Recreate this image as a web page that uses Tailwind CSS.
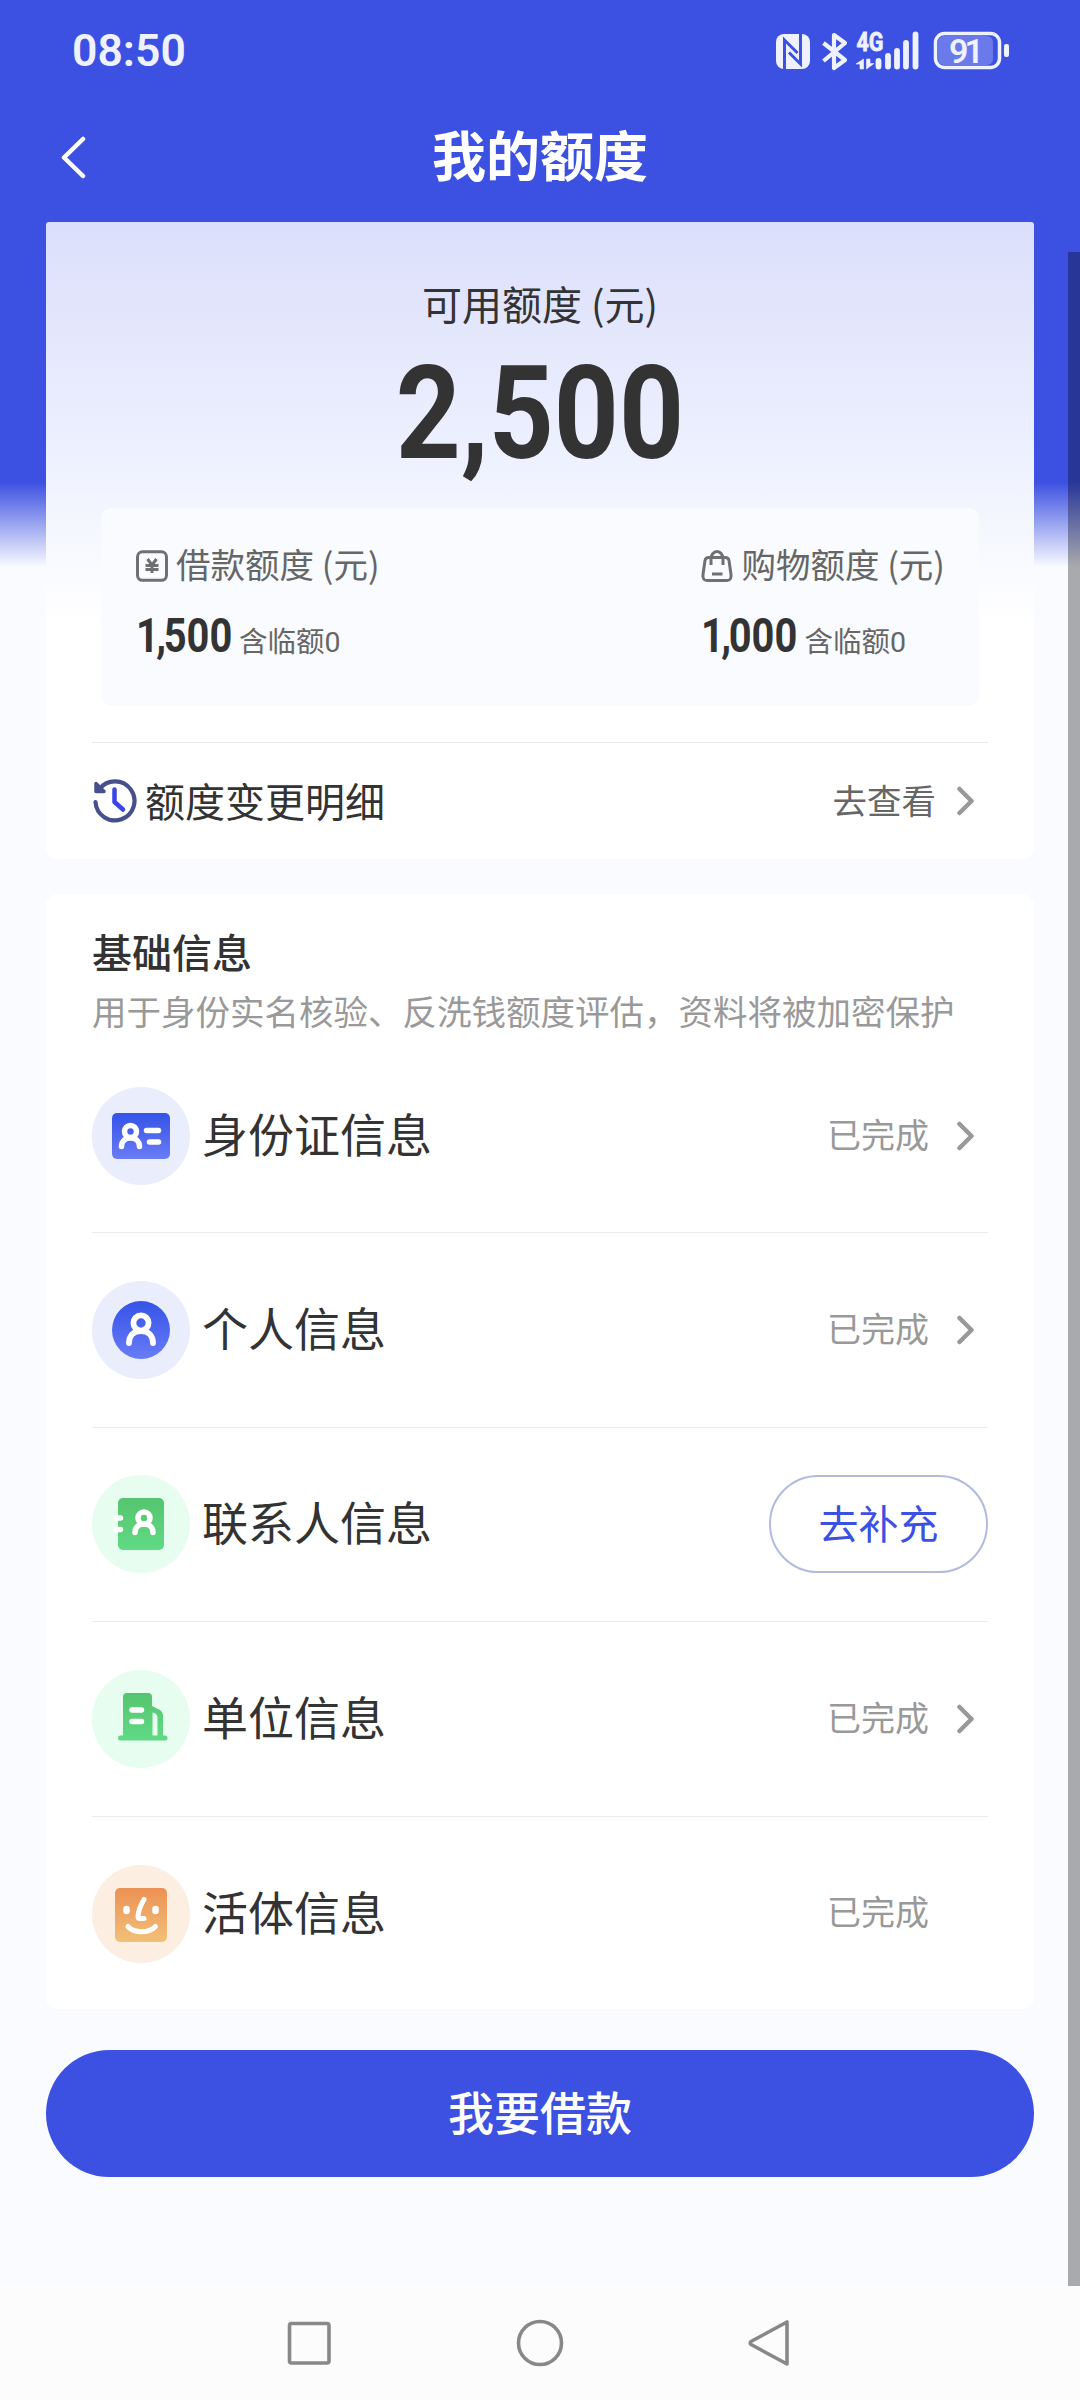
<!DOCTYPE html>
<html lang="zh-CN">
<head>
<meta charset="utf-8">
<title>我的额度</title>
<script src="https://cdn.jsdelivr.net/npm/@tailwindcss/browser@4"></script>
</head>
<body class="bg-[#f9fbff]">
<svg class="absolute h-0 w-0">
  <defs>
    <linearGradient id="blue" x1="0" y1="0" x2="0" y2="1"><stop offset="0" stop-color="#3453e8"/><stop offset="1" stop-color="#6a7cf6"/></linearGradient>
    <linearGradient id="green" x1="0" y1="0" x2="0" y2="1"><stop offset="0" stop-color="#56c46e"/><stop offset="1" stop-color="#60da85"/></linearGradient>
    <linearGradient id="orange" x1="0" y1="0" x2="0" y2="1"><stop offset="0" stop-color="#ec9154"/><stop offset="1" stop-color="#f2c077"/></linearGradient>
    <symbol id="chev" viewBox="0 0 18 30"><path d="M2.500 3 14.500 15 2.500 27" fill="none" stroke="#999" stroke-width="4.500" stroke-linecap="round" stroke-linejoin="round"/></symbol>
  </defs>
</svg>
<div class="relative flex h-[2400px] w-[1080px] flex-col overflow-hidden bg-[linear-gradient(180deg,#3c50e1_0,#3c50e1_482px,#f9fbff_567px)] font-['Noto_Sans_CJK_SC',sans-serif] text-[#333]">

  <!-- status bar -->
  <div class="flex h-[102px] items-center justify-between pr-[70px] pl-[72px]">
    <span class="font-['Roboto',sans-serif] text-[44.500px] leading-none font-semibold text-[#eef1ff]">08:50</span>
    <svg class="h-10 w-[236px] overflow-visible" viewBox="774 31 236 40" fill="none" stroke="#eef1ff">
      <rect x="776" y="34" width="34" height="35" rx="8" fill="#eef1ff" stroke="none"/>
      <path d="M784.500 69.500V40L797.500 53M800.500 33.500V64L789 52.500" stroke="#3c50e1" stroke-width="3"/>
      <path d="M823.500 43 845 60 834 68V35L845 43 823.500 61" stroke-width="4.200" stroke-linejoin="round"/>
      <text x="856.500" y="51" font-family="Roboto" font-weight="700" font-size="25" textLength="27" lengthAdjust="spacingAndGlyphs" fill="#eef1ff" stroke="#eef1ff" stroke-width=".8">4G</text>
      <path d="M863.500 59v10h-3.500v-5h-4zM866.500 69V59h3.500v4.500h4z" fill="#eef1ff" stroke="#eef1ff" stroke-width=".6"/>
      <path d="M878.500 61v5.500M888 56v10.500M897 51v15.500M906 43v23.500M915.500 34.500v32" stroke-width="5.800" stroke-linecap="round"/>
      <rect x="938" y="36" width="55" height="29" rx="6" fill="#6a7aea" stroke="none"/>
      <rect x="935.500" y="33.500" width="64" height="34" rx="9" stroke-width="3.500"/>
      <rect x="1004" y="44" width="5" height="13" rx="2" fill="#eef1ff" stroke="none"/>
      <text x="949" y="62.500" font-family="Roboto" font-weight="600" font-size="34" textLength="35" fill="#eef1ff" stroke="none">91</text>
    </svg>
  </div>

  <!-- title bar -->
  <div class="flex h-[120px] shrink-0 items-start pt-[34px] pl-[60px]">
    <svg class="h-[44px] w-7" viewBox="0 0 28 44"><path d="M23 3 4 21.500 23 40" fill="none" stroke="#fff" stroke-width="4.500" stroke-linecap="round" stroke-linejoin="round"/></svg>
    <h1 class="-mt-[9px] mr-[88px] flex-1 text-center text-[54px] leading-[54px] font-bold text-white">我的额度</h1>
  </div>

  <!-- quota card -->
  <section class="mx-[46px] flex h-[637px] shrink-0 flex-col rounded-t-[3px] rounded-b-xl bg-white bg-[linear-gradient(180deg,#dbdffb_0,#eef1fe_240px,#fff_400px)] px-[46px]">
    <p class="mt-[61px] text-center text-[40px] leading-[40px]">可用额度 (元)</p>
    <div class="mt-[26px] flex h-[130px] justify-center">
      <span class="block scale-x-[.88] font-['Roboto',sans-serif] text-[129px] leading-[130px] font-bold">2,500</span>
    </div>
    <div class="mx-[9px] mt-[29px] flex h-[198px] shrink-0 justify-between rounded-[10px] bg-[#f9fbff] pt-[38px] pr-[34px] pl-[35px]">
      <div>
        <div class="flex items-center gap-[8px] text-[34.500px] leading-[34px] text-[#666]">
          <svg class="mt-1 h-8 w-8" viewBox="0 0 32 32" fill="none" stroke="#707070" stroke-width="3"><rect x="1.500" y="1.800" width="29" height="28.500" rx="5"/><path d="m11.500 9 4.500 6 4.500-6M9.500 15.500h13M9.500 19.500h13M16 15v8"/></svg>
          <span class="-translate-y-px">借款额度 (元)</span>
        </div>
        <div class="mt-[30px] flex items-baseline">
          <span class="w-[103px] origin-left scale-x-[.83] font-['Roboto',sans-serif] text-[48px] leading-[48px] font-bold"><span class="tracking-[-3px]">1,</span>500</span>
          <span class="text-[28.500px] leading-[28px] text-[#666]">含临额<span class="font-['Roboto',sans-serif]">0</span></span>
        </div>
      </div>
      <div>
        <div class="flex items-center gap-[8px] text-[34.500px] leading-[34px] text-[#666]">
          <svg class="mt-1 h-8 w-8" viewBox="0 0 32 32" fill="none" stroke="#707070" stroke-width="3"><path d="M7.500 7.500h17c2 0 3 1 3.500 3l2 14c.500 4-1 6-4 6H6c-3 0-4.500-2-4-6l2-14c.500-2 1.500-3 3.500-3zM10 15V9c0-4 2.500-7.500 6-7.500S22 5 22 9v6M11 24h10.500"/></svg>
          <span class="-translate-y-px">购物额度 (元)</span>
        </div>
        <div class="mt-[30px] flex items-baseline">
          <span class="w-[103px] origin-left scale-x-[.83] font-['Roboto',sans-serif] text-[48px] leading-[48px] font-bold"><span class="tracking-[-3px]">1,</span>000</span>
          <span class="text-[28.500px] leading-[28px] text-[#666]">含临额<span class="font-['Roboto',sans-serif]">0</span></span>
        </div>
      </div>
    </div>
    <div class="mt-[36px] flex h-[117px] items-center border-t border-[#e9e9ec]">
      <svg class="h-[46px] w-[46px]" viewBox="0 0 46 46" fill="none" stroke-linecap="round" stroke-linejoin="round"><path d="M3.500 24A19.500 19.500 0 1 0 7.500 11" stroke="#46508c" stroke-width="4.200"/><path d="M4 5.500v8h8z" stroke="#46508c" stroke-width="3.500" fill="#46508c"/><path d="M22.500 11.500V24l8.500 7.500" stroke="#3a46e4" stroke-width="4.500"/></svg>
      <span class="ml-[7px] flex-1 -translate-y-px text-[40px] leading-[40px]">额度变更明细</span>
      <span class="-translate-y-[2px] text-[34.500px] leading-[34px] text-[#666]">去查看</span>
      <svg class="mr-[13px] ml-[21px] h-[30px] w-[18px]"><use href="#chev"/></svg>
    </div>
  </section>

  <!-- basic info card -->
  <section class="mx-[46px] mt-[35px] flex h-[1115px] shrink-0 flex-col rounded-xl bg-white px-[46px] pt-[37px]">
    <h2 class="text-[40px] leading-[40px] font-medium">基础信息</h2>
    <p class="mt-[22px] text-[34.500px] leading-[34px] whitespace-nowrap text-[#999]">用于身份实名核验、反洗钱额度评估，资料将被加密保护</p>
    <div class="mt-[12px] divide-y divide-[#ebebed]">
      <div class="flex h-[194.400px] items-center">
        <svg class="h-[98px] w-[98px]" viewBox="0 0 98 98"><circle cx="49" cy="49" r="49" fill="#e9edfc"/><rect x="20" y="26" width="58" height="46" rx="5" fill="url(#blue)"/><g fill="none" stroke="#fff" stroke-width="5.500" stroke-linecap="round"><circle cx="38.500" cy="44.500" r="6"/><path d="M29.500 59.500c0-5 3.500-8.500 9-8.500s9 3.500 9 8.500M54.500 43.500H66.500M57.500 55H66.500"/></g></svg>
        <span class="ml-[12px] flex-1 -translate-y-[4px] text-[46px] leading-[46px]">身份证信息</span>
        <span class="-translate-y-[2px] text-[34px] leading-[34px] text-[#999]">已完成</span>
        <svg class="mr-[13px] ml-[28px] h-[30px] w-[18px]"><use href="#chev"/></svg>
      </div>
      <div class="flex h-[194.400px] items-center">
        <svg class="h-[98px] w-[98px]" viewBox="0 0 98 98"><circle cx="49" cy="49" r="49" fill="#e9edfc"/><circle cx="49" cy="49" r="29" fill="url(#blue)"/><g fill="none" stroke="#fff" stroke-width="5.800" stroke-linecap="round"><circle cx="49" cy="42" r="7.600"/><path d="M37 62c0-7 4.500-12 12-12s12 5 12 12"/></g></svg>
        <span class="ml-[12px] flex-1 -translate-y-[4px] text-[46px] leading-[46px]">个人信息</span>
        <span class="-translate-y-[2px] text-[34px] leading-[34px] text-[#999]">已完成</span>
        <svg class="mr-[13px] ml-[28px] h-[30px] w-[18px]"><use href="#chev"/></svg>
      </div>
      <div class="flex h-[194.400px] items-center">
        <svg class="h-[98px] w-[98px]" viewBox="0 0 98 98"><circle cx="49" cy="49" r="49" fill="#e6fdf0"/><rect x="26" y="23" width="46" height="52" rx="5" fill="url(#green)"/><g fill="none" stroke="#fff" stroke-width="5.500" stroke-linecap="round"><circle cx="52" cy="43" r="6"/><path d="M43 57.500c0-5 3.500-8.500 9-8.500s9 3.500 9 8.500"/><path d="M24 43h4.500M24 54.500h4.500"/></g></svg>
        <span class="ml-[12px] flex-1 -translate-y-[4px] text-[46px] leading-[46px]">联系人信息</span>
        <span class="flex h-[98px] w-[219px] items-center justify-center rounded-full border-2 border-[#b2bade] pb-[4px] text-[40px] leading-[40px] text-[#3c50e1]">去补充</span>
      </div>
      <div class="flex h-[194.400px] items-center">
        <svg class="h-[98px] w-[98px]" viewBox="0 0 98 98"><circle cx="49" cy="49" r="49" fill="#e6fdf0"/><path d="M35 23h21q4 0 4 4v9l8 4q3 2 3 5v20.500h2q2.500 0 2.500 2.500t-2.500 2.500H28.500Q26 70.500 26 68t2.500-2.500H31V27q0-4 4-4z" fill="url(#green)"/><path d="M40 40h9.500M40 51.500h9.500" stroke="#fff" stroke-width="5.500" stroke-linecap="round"/><path d="M60.500 42.500q5 1 5 5V65.500h-5z" fill="#e6fdf0"/></svg>
        <span class="ml-[12px] flex-1 -translate-y-[4px] text-[46px] leading-[46px]">单位信息</span>
        <span class="-translate-y-[2px] text-[34px] leading-[34px] text-[#999]">已完成</span>
        <svg class="mr-[13px] ml-[28px] h-[30px] w-[18px]"><use href="#chev"/></svg>
      </div>
      <div class="flex h-[194.400px] items-center">
        <svg class="h-[98px] w-[98px]" viewBox="0 0 98 98"><circle cx="49" cy="49" r="49" fill="#fcefe2"/><rect x="23" y="23" width="52" height="54" rx="5" fill="url(#orange)"/><g fill="none" stroke="#fff" stroke-width="5" stroke-linecap="round" stroke-linejoin="round"><path d="M52 34.500c-3 5-5.500 10-6 17q0 2 2 2h4M36 61.500c6 7 21 7 27.500 0"/><path d="M34.500 44v2M63.500 44v2" stroke-width="6.500"/></g></svg>
        <span class="ml-[12px] flex-1 -translate-y-[4px] text-[46px] leading-[46px]">活体信息</span>
        <span class="mr-[59px] -translate-y-[3px] text-[34px] leading-[34px] text-[#999]">已完成</span>
      </div>
    </div>
  </section>

  <button class="mx-[46px] mt-[41px] h-[127px] shrink-0 rounded-full bg-[#3c50e1] pb-[7px] text-[46px] leading-[46px] font-medium text-white">我要借款</button>

  <!-- navigation bar -->
  <nav class="mt-auto flex h-[115px] shrink-0 items-start bg-[#fcfcfc] pt-[34px] pl-[285px]">
    <svg class="h-12 w-[508px]" viewBox="285 2319 508 48" fill="none" stroke="#888" stroke-width="3.600" stroke-linejoin="round"><rect x="289.500" y="2323.500" width="39.500" height="39.500" rx="2"/><circle cx="540" cy="2343" r="21.500"/><path d="M787 2322v42L751 2344.500q-1.500-1.500 0-3z"/></svg>
  </nav>

  <!-- scrollbar -->
  <div class="absolute top-[252px] right-0 h-[2034px] w-3 bg-black/32"></div>
</div>
</body>
</html>
